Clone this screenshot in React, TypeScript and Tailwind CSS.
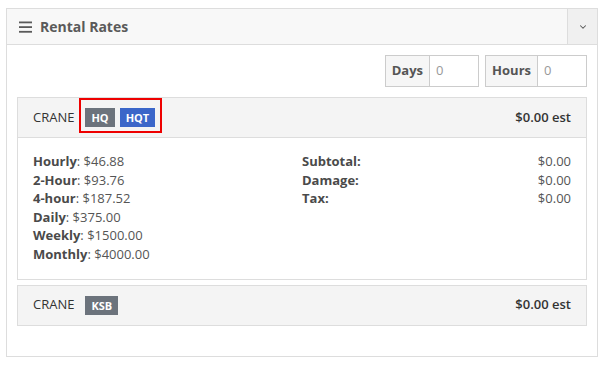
import { ChevronDown } from "lucide-react";

const rates = [
  { label: "Hourly", value: "$46.88" },
  { label: "2-Hour", value: "$93.76" },
  { label: "4-hour", value: "$187.52" },
  { label: "Daily", value: "$375.00" },
  { label: "Weekly", value: "$1500.00" },
  { label: "Monthly", value: "$4000.00" },
];

const totals = [
  { label: "Subtotal:", value: "$0.00" },
  { label: "Damage:", value: "$0.00" },
  { label: "Tax:", value: "$0.00" },
];

function Badge({ text, blue }: { text: string; blue?: boolean }) {
  return (
    <span
      className={`h-[19px] px-[6px] flex items-center text-[11px] font-bold text-white leading-none ${
        blue ? "bg-[#3b66c9]" : "bg-[#6c737c]"
      }`}
    >
      {text}
    </span>
  );
}

function InputGroup({ label }: { label: string }) {
  return (
    <div className="flex h-[32px] border border-[#cccccc]">
      <div className="px-[6px] flex items-center bg-[#f6f6f6] border-r border-[#cccccc] font-bold text-[13px] text-[#555]">
        {label}
      </div>
      <div className="w-[48px] px-[6px] flex items-center bg-white text-[13px] text-[#999]">0</div>
    </div>
  );
}

export default function App() {
  return (
    <div
      className="w-[605px] h-[366px] bg-white pt-[8px] pl-[6px] pr-[7px]"
      style={{ fontFamily: '"Open Sans", "Liberation Sans", sans-serif' }}
    >
      <div className="border border-[#dddddd] h-[349px] flex flex-col">
        {/* Header */}
        <div className="h-[36px] flex bg-[#f8f8f8] border-b border-[#dddddd]">
          <div className="flex-1 flex items-center pl-[12px] gap-[8px]">
            <svg width="13" height="12" viewBox="0 0 13 12" className="text-[#5a5a5a]">
              <rect x="0" y="0.5" width="13" height="1.8" fill="currentColor" />
              <rect x="0" y="5.2" width="13" height="1.8" fill="currentColor" />
              <rect x="0" y="9.9" width="13" height="1.8" fill="currentColor" />
            </svg>
            <span className="text-[14px] font-bold text-[#5a5a5a]">Rental Rates</span>
          </div>
          <div className="w-[30px] flex items-center justify-center bg-[#f0f0f0] border-l border-[#dddddd]">
            <ChevronDown size={10} strokeWidth={2.5} className="text-[#555]" />
          </div>
        </div>

        {/* Body */}
        <div className="px-[10px] pt-[10px]">
          <div className="flex justify-end gap-[6px]">
            <InputGroup label="Days" />
            <InputGroup label="Hours" />
          </div>

          {/* Card 1 */}
          <div className="mt-[10px] border border-[#dddddd]">
            <div className="h-[40px] flex items-center px-[15px] bg-[#f4f4f4] border-b border-[#dddddd]">
              <span className="text-[13px] text-[#333]">CRANE</span>
              <div className="self-start ml-[5px] flex gap-[5px] border-2 border-[#ee0000] pt-[8px] pb-[4px] pl-[4px] pr-[5px]">
                <Badge text="HQ" />
                <Badge text="HQT" blue />
              </div>
              <span className="ml-auto text-[13px] font-semibold text-[#333]">$0.00 est</span>
            </div>
            <div className="grid grid-cols-2 px-[15px] pt-[14px] pb-[15px] text-[13px] leading-[18.6px]">
              <div>
                {rates.map((r) => (
                  <div key={r.label}>
                    <span className="font-bold text-[#4a4a4a]">{r.label}</span>
                    <span className="text-[#555]">: {r.value}</span>
                  </div>
                ))}
              </div>
              <div>
                {totals.map((t) => (
                  <div key={t.label} className="flex justify-between">
                    <span className="font-bold text-[#4a4a4a]">{t.label}</span>
                    <span className="text-[#555]">{t.value}</span>
                  </div>
                ))}
              </div>
            </div>
          </div>

          {/* Card 2 */}
          <div className="mt-[5px] border border-[#dddddd]">
            <div className="h-[39px] flex items-center px-[15px] bg-[#f4f4f4]">
              <span className="text-[13px] text-[#333]">CRANE</span>
              <div className="ml-[11px] flex">
                <Badge text="KSB" />
              </div>
              <span className="ml-auto text-[13px] font-semibold text-[#333]">$0.00 est</span>
            </div>
          </div>
        </div>
      </div>
    </div>
  );
}
